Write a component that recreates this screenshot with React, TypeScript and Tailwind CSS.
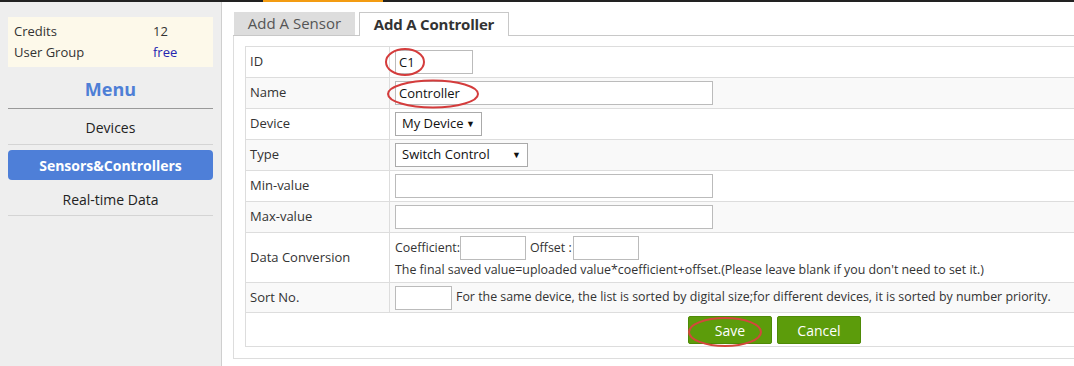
import React from "react";

const font = { fontFamily: '"Open Sans", "Noto Sans", Arial, sans-serif' };

const Row = ({
  label,
  shaded,
  children,
  className = "",
}: {
  label: string;
  shaded?: boolean;
  children: React.ReactNode;
  className?: string;
}) => (
  <div className={`flex border-b border-[#ddd] ${shaded ? "bg-[#f9f9f9]" : "bg-white"}`}>
    <div className="w-[144px] shrink-0 border-r border-[#ddd] pl-[4px] flex items-center text-[13px]">
      {label}
    </div>
    <div className={`flex-1 pl-[5px] ${className}`}>{children}</div>
  </div>
);

const Input = ({ w, value }: { w: string; value?: string }) => (
  <div className={`${w} h-[24px] border border-[#bbb] bg-white px-[3px] leading-[22px] text-[13px] text-[#111]`}>
    {value}
  </div>
);

const Select = ({ w, value }: { w: string; value: string }) => (
  <div className={`${w} h-[24px] border border-[#aaa] bg-white pl-[6px] pr-[6px] flex items-center justify-between text-[13px] text-[#111]`}>
    <span>{value}</span>
    <span className="text-[9px]">▼</span>
  </div>
);

export default function App() {
  return (
    <div className="relative w-[1074px] h-[366px] overflow-hidden bg-white text-[13px] text-[#333]" style={font}>
      {/* top nav strip */}
      <div className="h-[2px] bg-[#222] flex">
        <div className="ml-[263px] w-[120px] bg-[#f39c12]" />
      </div>

      <div className="flex">
        {/* sidebar */}
        <div className="w-[222px] h-[364px] shrink-0 bg-[#eeeeee] border-r border-[#cfcfcf] px-[8px] pt-[15px]">
          <div className="bg-[#fdf9ea] px-[6px] py-[4px]">
            <div className="flex leading-[21px]">
              <span className="w-[139px]">Credits</span>
              <span>12</span>
            </div>
            <div className="flex leading-[21px]">
              <span className="w-[139px]">User Group</span>
              <span className="text-[#2424b0]">free</span>
            </div>
          </div>
          <div className="pt-[10px] pb-[7px] leading-[24px] text-center text-[18px] font-bold text-[#4e7fd6] border-b border-[#999]">
            Menu
          </div>
          <div className="pt-[9px] pb-[6px] leading-[20px] text-center text-[14px] text-[#222] border-b border-[#d4d4d4]">
            Devices
          </div>
          <div className="mt-[5px] h-[30px] rounded-[4px] bg-[#4e7fd8] text-white text-[14px] font-bold flex items-center justify-center">
            Sensors&amp;Controllers
          </div>
          <div className="pt-[10px] pb-[5px] leading-[20px] text-center text-[14px] text-[#222] border-b border-[#d4d4d4]">
            Real-time Data
          </div>
        </div>

        {/* main */}
        <div className="flex-1 pt-[10px] pl-[11px]">
          <div className="flex gap-[4px] pl-[1px] w-[1083px] border-b border-[#c8c8c8] h-[24px]">
            <div className="w-[121px] h-[23px] bg-[#dddddd] text-[15px] text-[#555] flex items-center justify-center">
              Add A Sensor
            </div>
            <div className="w-[150px] h-[24px] bg-white border border-b-0 border-[#c8c8c8] text-[15px] font-bold tracking-[-0.2px] text-[#333] flex items-center justify-center">
              Add A Controller
            </div>
          </div>
          <div className="w-[1083px] border-l border-r border-b border-[#ddd] px-[11px] pt-[10px] pb-[11px]">
            <div className="border border-[#ddd] border-b-0">
              <Row label="ID" className="h-[30px] flex items-center">
                <Input w="w-[78px]" value="C1" />
              </Row>
              <Row label="Name" shaded className="h-[30px] flex items-center">
                <Input w="w-[318px]" value="Controller" />
              </Row>
              <Row label="Device" className="h-[30px] flex items-center">
                <Select w="w-[87px]" value="My Device" />
              </Row>
              <Row label="Type" shaded className="h-[30px] flex items-center">
                <Select w="w-[133px]" value="Switch Control" />
              </Row>
              <Row label="Min-value" className="h-[30px] flex items-center">
                <Input w="w-[318px]" />
              </Row>
              <Row label="Max-value" shaded className="h-[30px] flex items-center">
                <Input w="w-[318px]" />
              </Row>
              <Row label="Data Conversion" className="pt-[3px] pb-[2px] text-[12.4px]">
                <div className="flex items-center h-[24px]">
                  <span>Coefficient:</span>
                  <Input w="w-[66px]" />
                  <span className="ml-[4px] mr-[1px]">Offset :</span>
                  <Input w="w-[66px]" />
                </div>
                <div className="leading-[20px]">
                  The final saved value=uploaded value*coefficient+offset.(Please leave blank if you don't need to set it.)
                </div>
              </Row>
              <Row label="Sort No." shaded className="h-[29px] flex items-center gap-[4px] text-[12.4px]">
                <Input w="w-[57px]" />
                <span>For the same device, the list is sorted by digital size;for different devices, it is sorted by number priority.</span>
              </Row>
              <div className="flex justify-center gap-[5px] pt-[3px] pb-[2px] border-b border-[#ddd]">
                <button className="w-[84px] h-[28px] rounded-[2px] bg-[#5c9c0b] border border-[#4e8a06] text-white text-[14px]">
                  Save
                </button>
                <button className="w-[84px] h-[28px] rounded-[2px] bg-[#5c9c0b] border border-[#4e8a06] text-white text-[14px]">
                  Cancel
                </button>
              </div>
            </div>
          </div>
        </div>
      </div>

      {/* red annotation marks */}
      <svg className="absolute inset-0 pointer-events-none" width="1074" height="366">
        <ellipse cx="405" cy="62" rx="19" ry="13" fill="none" stroke="#d43c3c" strokeWidth="2" />
        <ellipse cx="433" cy="94" rx="45" ry="13.5" fill="none" stroke="#d43c3c" strokeWidth="2" />
        <ellipse cx="725" cy="332" rx="36" ry="14" fill="none" stroke="#d4473c" strokeWidth="2" />
      </svg>
    </div>
  );
}
